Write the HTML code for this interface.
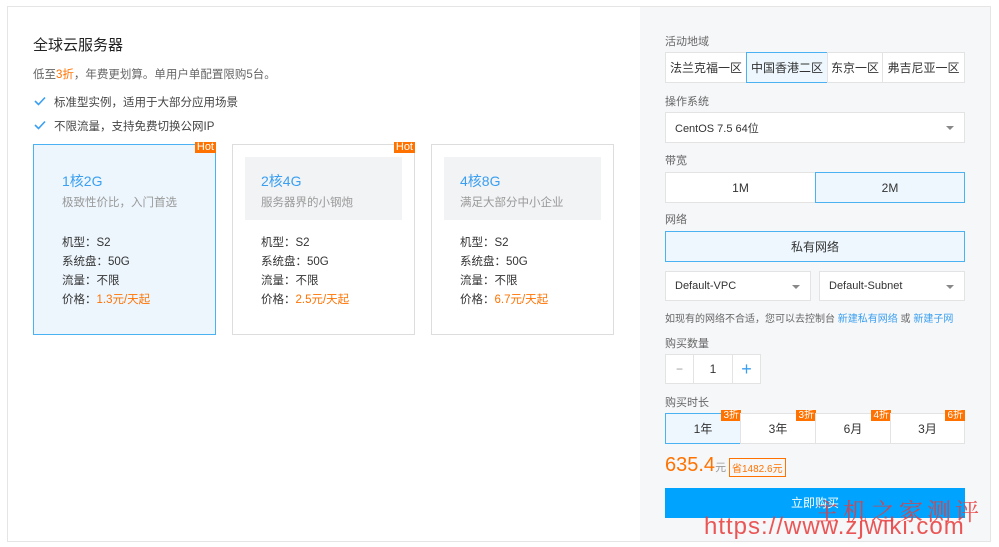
<!DOCTYPE html><html><head><meta charset="utf-8"><style>
*{margin:0;padding:0;box-sizing:border-box}
body{width:999px;height:547px;background:#fff;font-family:"Liberation Sans","Noto Sans CJK SC",sans-serif;position:relative;overflow:hidden;color:#333}
.a{position:absolute;white-space:nowrap}
.frame{left:7px;top:6px;width:984px;height:536px;border:1px solid #e5e5e5}
.rp{left:640px;top:7px;width:350px;height:534px;background:#f6f7f9}
.lbl{font-size:11px;color:#666}
.b{position:absolute;background:#fff;border:1px solid #e3e3e3;font-size:12px;color:#333;display:flex;align-items:center;justify-content:center}
.sel{background:#eef7fe;border-color:#4ab1f2}
.card{position:absolute;border:1px solid #ddd;background:#fff;top:144px;width:183px;height:191px}
.card.s{background:#edf6fd;border-color:#4ab1f2}
.hot{position:absolute;right:-1px;top:-3px;background:#ff7200;color:#fff;font-size:11px;line-height:11px;padding:0 2px}
.ib{position:absolute;left:12px;top:12px;width:157px;height:63px;background:#f2f3f5}
.card.s .ib{background:transparent}
.ct{position:absolute;left:28px;top:26px;font-size:14px;color:#3a9ff0}
.cs{position:absolute;left:28px;top:49px;font-size:11.5px;color:#999}
.sp{position:absolute;left:28px;font-size:11.5px;color:#333}
.or{color:#ff7200}
.arr{position:absolute;right:10px;top:13px;border:4px solid transparent;border-top:4px solid #888;border-bottom:0}
.tag{position:absolute;right:-1px;top:-4px;background:#ff7200;color:#fff;font-size:10px;line-height:11px;padding:0 2px}
</style></head><body>
<div class="a frame"></div><div class="a rp"></div>
<div class="a" style="left:33px;top:34px;font-size:15px;color:#222">全球云服务器</div>
<div class="a" style="left:33px;top:66px;font-size:11.5px;color:#666">低至<span class="or">3折</span>，年费更划算。单用户单配置限购5台。</div>
<svg class="a" style="left:34px;top:96px" width="12" height="10"><path d="M1 5l3.5 3.5L11 1.5" stroke="#3a9ff0" stroke-width="1.6" fill="none"/></svg>
<div class="a" style="left:54px;top:94px;font-size:11.5px;color:#444">标准型实例，适用于大部分应用场景</div>
<svg class="a" style="left:34px;top:120px" width="12" height="10"><path d="M1 5l3.5 3.5L11 1.5" stroke="#3a9ff0" stroke-width="1.6" fill="none"/></svg>
<div class="a" style="left:54px;top:118px;font-size:11.5px;color:#444">不限流量，支持免费切换公网IP</div>

<div class="card s" style="left:33px"><div class="hot">Hot</div><div class="ib"></div><div class="ct">1核2G</div><div class="cs">极致性价比，入门首选</div>
<div class="sp" style="top:89px">机型：S2</div><div class="sp" style="top:108px">系统盘：50G</div><div class="sp" style="top:127px">流量：不限</div><div class="sp" style="top:146px">价格：<span class="or">1.3元/天起</span></div></div>
<div class="card" style="left:232px"><div class="hot">Hot</div><div class="ib"></div><div class="ct">2核4G</div><div class="cs">服务器界的小钢炮</div>
<div class="sp" style="top:89px">机型：S2</div><div class="sp" style="top:108px">系统盘：50G</div><div class="sp" style="top:127px">流量：不限</div><div class="sp" style="top:146px">价格：<span class="or">2.5元/天起</span></div></div>
<div class="card" style="left:431px"><div class="ib"></div><div class="ct">4核8G</div><div class="cs">满足大部分中小企业</div>
<div class="sp" style="top:89px">机型：S2</div><div class="sp" style="top:108px">系统盘：50G</div><div class="sp" style="top:127px">流量：不限</div><div class="sp" style="top:146px">价格：<span class="or">6.7元/天起</span></div></div>

<div class="a lbl" style="left:665px;top:33px">活动地域</div>
<div class="b" style="left:665px;top:52px;width:82px;height:31px">法兰克福一区</div>
<div class="b sel" style="left:746px;top:52px;width:82px;height:31px">中国香港二区</div>
<div class="b" style="left:827px;top:52px;width:56px;height:31px">东京一区</div>
<div class="b" style="left:882px;top:52px;width:83px;height:31px">弗吉尼亚一区</div>
<div class="a lbl" style="left:665px;top:93px">操作系统</div>
<div class="b" style="left:665px;top:112px;width:300px;height:31px;justify-content:flex-start;padding-left:9px;font-size:11px">CentOS 7.5 64位<span class="arr"></span></div>
<div class="a lbl" style="left:665px;top:152px">带宽</div>
<div class="b" style="left:665px;top:172px;width:151px;height:31px">1M</div>
<div class="b sel" style="left:815px;top:172px;width:150px;height:31px">2M</div>
<div class="a lbl" style="left:665px;top:211px">网络</div>
<div class="b sel" style="left:665px;top:231px;width:300px;height:31px">私有网络</div>
<div class="b" style="left:665px;top:271px;width:146px;height:30px;justify-content:flex-start;padding-left:9px;font-size:11px">Default-VPC<span class="arr"></span></div>
<div class="b" style="left:819px;top:271px;width:146px;height:30px;justify-content:flex-start;padding-left:9px;font-size:11px">Default-Subnet<span class="arr"></span></div>
<div class="a" style="left:665px;top:310px;font-size:10px;color:#666">如现有的网络不合适，您可以去控制台 <span style="color:#3a9ff0">新建私有网络</span> 或 <span style="color:#3a9ff0">新建子网</span></div>
<div class="a lbl" style="left:665px;top:335px">购买数量</div>
<div class="b" style="left:665px;top:354px;width:29px;height:30px;color:#999">−</div>
<div class="b" style="left:693px;top:354px;width:40px;height:30px">1</div>
<div class="b" style="left:732px;top:354px;width:29px;height:30px;color:#3a9ff0;font-size:18px">+</div>
<div class="a lbl" style="left:665px;top:394px">购买时长</div>
<div class="b sel" style="left:665px;top:413px;width:76px;height:31px">1年<span class="tag">3折</span></div>
<div class="b" style="left:740px;top:413px;width:76px;height:31px">3年<span class="tag">3折</span></div>
<div class="b" style="left:815px;top:413px;width:76px;height:31px">6月<span class="tag">4折</span></div>
<div class="b" style="left:890px;top:413px;width:75px;height:31px">3月<span class="tag">6折</span></div>
<div class="a" style="left:665px;top:454px;font-size:20px;color:#ff7200">635.4<span style="font-size:11px;color:#999">元</span></div>
<div class="a" style="left:729px;top:458px;font-size:10px;color:#ff7200;border:1px solid #ff7200;padding:1px 2px">省1482.6元</div>
<div class="a" style="left:665px;top:488px;width:300px;height:30px;background:#00a4ff;color:#fff;font-size:12px;text-align:center;line-height:30px">立即购买</div>
<div class="a" style="left:815px;top:492px;font-size:24px;color:#e83a3a;opacity:.85;font-family:'Noto Serif CJK SC',serif;letter-spacing:4px">主机之家测评</div>
<div class="a" style="left:704px;top:513px;font-size:24px;color:#e83a3a;opacity:.85;font-family:'Liberation Sans',sans-serif;letter-spacing:1px">https://www.zjwiki.com</div>
</body></html>
